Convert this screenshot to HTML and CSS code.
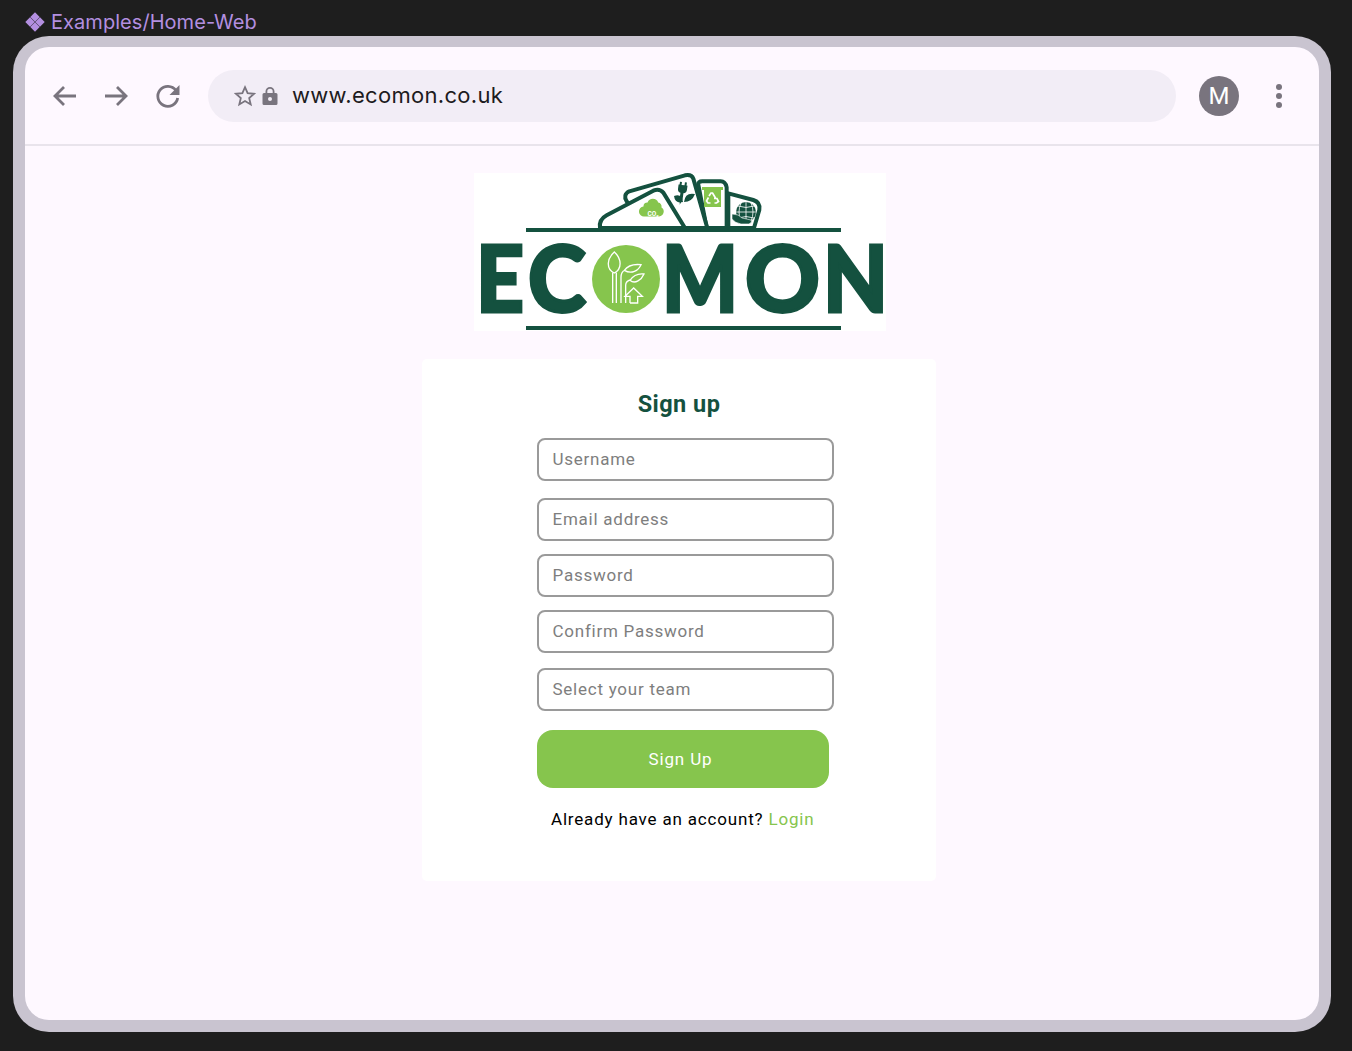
FILE: index.html
```html
<!DOCTYPE html>
<html lang="en">
<head>
<meta charset="utf-8">
<title>Ecomon sign up</title>
<link rel="stylesheet" href="styles.css">
</head>
<body>
<div class="label">
  <svg class="label-icon" viewBox="0 0 20 20" width="20" height="20"><path d="M10 .3l4.700 4.700-4.700 4.700L5.300 5zM5 5.300L9.700 10 5 14.700.3 10zM15 5.300l4.700 4.700-4.700 4.700L10.300 10zM10 10.300l4.700 4.700-4.700 4.700L5.300 15z"/></svg>
  <span>Examples/Home-Web</span>
</div>
<div class="device">
  <div class="screen">
    <header class="toolbar">
      <div class="nav">
        <svg class="nav-icon" viewBox="0 0 26 26" width="26" height="26"><path d="M24 13H3M12 4l-9 9 9 9"/></svg>
        <svg class="nav-icon" viewBox="0 0 26 26" width="26" height="26"><path d="M2 13h21M14 4l9 9-9 9"/></svg>
        <svg class="nav-icon" viewBox="0 0 26 26" width="26" height="26"><path d="M22 7.500a10 10 0 1 0 1.700 7.500"/><path class="solid" d="M25.500 2v10h-10z"/></svg>
      </div>
      <div class="omnibox">
        <svg class="star" viewBox="0 0 24 24" width="24" height="24"><path d="M12 3.200l2.600 6 6.500.6-4.900 4.300 1.500 6.400-5.700-3.400-5.700 3.400 1.500-6.400-4.900-4.300 6.500-.6z"/></svg>
        <svg class="lock" viewBox="0 0 16 20" width="16" height="20"><path d="M3.500 7V5.500a4.500 4.500 0 0 1 9 0V7H14a1.500 1.500 0 0 1 1.500 1.500v9A1.500 1.500 0 0 1 14 19H2a1.500 1.500 0 0 1-1.500-1.500v-9A1.500 1.500 0 0 1 2 7zM5.300 7h5.400V5.500a2.700 2.700 0 0 0-5.400 0zM8 11a2 2 0 1 0 0 4 2 2 0 0 0 0-4z" fill-rule="evenodd"/></svg>
        <span class="url">www.ecomon.co.uk</span>
      </div>
      <div class="avatar">M</div>
      <div class="menu"><i></i><i></i><i></i></div>
    </header>
    <main class="page">
      <svg class="logo" viewBox="0 0 412 158" width="412" height="158" role="img" aria-label="Ecomon logo">
        <rect width="412" height="158" fill="#fff"/>
        <rect x="52" y="55" width="315" height="4" fill="#14513f"/>
        <rect x="52" y="153" width="315" height="4" fill="#14513f"/>
        <g transform="translate(116 -5) scale(.3333)" fill="#fff" stroke="#14513f" stroke-width="12" stroke-linejoin="round">
          <path d="M415 180V76l75 20q22 7 18 30l-16 54z"/>
          <path d="M350 180L325 50q-2-10 12-10h55q14 0 18 18v122z"/>
          <path d="M110 100q-12-20 8-30L285 22q20-4 25 10l42 148H180z"/>
          <path d="M30 180q-4-25 20-38L190 68q18-8 30 6l65 106z"/>
        </g>
        <g transform="translate(167 18) scale(.82)">
          <path fill="#86c54d" d="M4 31a6 6 0 0 1-1-12 5 5 0 0 1 5-5 7 7 0 0 1 13 0 5 5 0 0 1 4 6 6 6 0 0 1-3 11z"/>
          <text class="co" x="8" y="30">CO₂</text>
        </g>
        <g transform="translate(200 9)" fill="#14513f">
          <path d="M5 3h2v3h3V3h2v3h1v4a4 4 0 0 1-3 4v6l-2 6-1-6v-6a4 4 0 0 1-3-4V6h1z" transform="translate(0 -3) rotate(8 8 10)"/>
          <path d="M9 20q-8 2-9-6 8-3 9 6zM10 20q8 0 11-8-10-2-11 8z"/>
        </g>
        <g transform="translate(228 14)">
          <rect x="0" y="0" width="21" height="3" fill="#86c54d"/>
          <rect x="2" y="3" width="17" height="17" fill="#86c54d"/>
          <path d="M10.500 6l3 5M12 11.500h3l1.500 3-2 1.500h-2M8.500 16H6l-1.500-2 2-3.500M7 9l2-3h2" fill="none" stroke="#fff" stroke-width="1.700"/>
        </g>
        <g transform="translate(258 28)">
          <circle cx="14" cy="11" r="10" fill="#14513f"/>
          <path d="M4 11h20M14 1v20M6 5q8 3 16 0M6 17q8-3 16 0M9 2q-4 9 0 18M19 2q4 9 0 18" fill="none" stroke="#fff" stroke-width=".8"/>
          <path d="M0 13q7 0 10 4l9 2q2 2-2 4H9q-6-1-9-5z" fill="#14513f" stroke="#fff" stroke-width=".6"/>
        </g>
        <text class="mark" x="2" y="139" textLength="48" lengthAdjust="spacingAndGlyphs">E</text>
        <text class="mark" x="54" y="139" textLength="58" lengthAdjust="spacingAndGlyphs">C</text>
        <circle cx="152" cy="106" r="34" fill="#86c54d"/>
        <g transform="translate(111 65) scale(.3333)" fill="none" stroke="#fff" stroke-width="4">
          <path d="M88 42C66 62 62 92 88 105 112 92 110 62 88 42zM83 195V104M94 195V104"/>
          <path d="M108 195V118Q108 102 120 96M118 97C130 80 150 78 168 80 160 98 140 110 118 97"/>
          <path d="M122 195V142Q122 130 135 126M135 127C145 112 160 106 177 108 170 125 150 140 135 127"/>
          <path d="M135 195V175H120L146 150 172 175H158V195H135"/>
        </g>
        <text class="mark" x="188" y="139" textLength="76" lengthAdjust="spacingAndGlyphs">M</text>
        <text class="mark" x="271" y="139" textLength="75" lengthAdjust="spacingAndGlyphs">O</text>
        <text class="mark" x="349" y="139" textLength="65" lengthAdjust="spacingAndGlyphs">N</text>
      </svg>
      <section class="card">
        <h1 class="title">Sign up</h1>
        <div class="field field-first">Username</div>
        <div class="field">Email address</div>
        <div class="field">Password</div>
        <div class="field">Confirm Password</div>
        <div class="field field-team">Select your team</div>
        <div class="button">Sign Up</div>
        <p class="foot">Already have an account? <span class="login">Login</span></p>
      </section>
    </main>
  </div>
</div>
</body>
</html>
```
FILE: styles.css
```css
* { box-sizing: border-box; }
html, body { margin: 0; height: 100%; }
body { background: #1e1e1e; font-family: Roboto, sans-serif; padding: 10px 21px 0 13px; overflow: hidden; }

.label { display: flex; align-items: center; gap: 6px; height: 26px; padding: 0 0 2px 12px; color: #b38fe0; font: 20px/24px Inter, sans-serif; letter-spacing: .05px; }
.label-icon { fill: #b38fe0; flex: none; }

.device { width: 1318px; height: 996px; background: #c9c4d0; border-radius: 36px; padding: 11px 12px 12px 12px; }
.screen { height: 100%; background: #fef8ff; border-radius: 24px; overflow: hidden; }

.toolbar { display: flex; align-items: center; height: 99px; border-bottom: 2px solid #e9e4ec; padding: 1px 0 0 27px; }
.nav { display: flex; gap: 25px; width: 156px; flex: none; }
.nav-icon { fill: none; stroke: #79747e; stroke-width: 2.8; flex: none; overflow: visible; }
.nav-icon .solid { fill: #79747e; stroke: none; }

.omnibox { display: flex; align-items: center; width: 968px; height: 52px; background: #f2edf6; border-radius: 26px; padding-left: 25px; flex: none; }
.star { fill: none; stroke: #79747e; stroke-width: 1.800; flex: none; }
.lock { fill: #79747e; flex: none; margin: 0 14px 0 5px; }
.url { color: #1d1b20; font: 22px/32px Inter, sans-serif; letter-spacing: .3px; margin-bottom: 2px; }

.avatar { width: 40px; height: 40px; border-radius: 50%; background: #79747e; color: #fff; font: 24px/40px Roboto, sans-serif; text-align: center; margin-left: 23px; flex: none; }
.menu { display: flex; flex-direction: column; align-items: center; gap: 3px; margin-left: 37px; flex: none; }
.menu i { width: 6px; height: 6px; border-radius: 50%; background: #79747e; }

.page { display: flex; flex-direction: column; align-items: center; padding-left: 14px; }
.logo { display: block; margin: 27px 0 0 1px; flex: none; overflow: visible; }
.mark { font: 900 92px Lato, "Liberation Sans", sans-serif; fill: #14513f; stroke: #14513f; stroke-width: 3; }
.co { font: 700 8px Roboto, sans-serif; fill: #fff; }

.card { width: 514px; height: 522px; background: #fff; border-radius: 5px; margin: 28px 0 0 0; padding: 29px 0 0 115px; }
.title { margin: 0 0 18px -115px; text-align: center; color: #14513f; font: 700 23.500px/32px Roboto, sans-serif; letter-spacing: .45px; }
.field { width: 297px; height: 43px; border: 2px solid #9a9a9a; border-radius: 8px; padding-left: 13.500px; color: #7e7e7e; font: 17px/39px Roboto, sans-serif; letter-spacing: .75px; margin-bottom: 13px; background: #fff; }
.field-first { margin-bottom: 17px; }
.field-team { margin: 15px 0 19px; }
.button { width: 292px; height: 58px; background: #86c54d; border-radius: 16px; color: #fff; text-align: center; font: 17px/58px Roboto, sans-serif; letter-spacing: .85px; padding-right: 5px; }
.foot { margin: 19px 0 0 14px; color: #000; font: 17px/24px Roboto, sans-serif; letter-spacing: .82px; }
.login { color: #86c54d; }
```
